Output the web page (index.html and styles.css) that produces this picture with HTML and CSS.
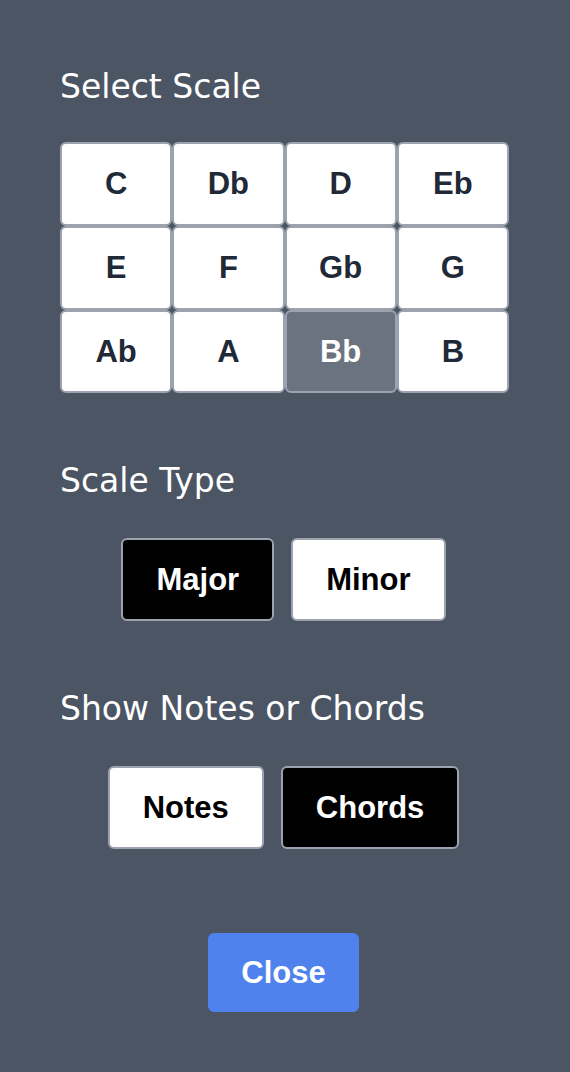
FILE: index.html
```html
<!DOCTYPE html>
<html>
<head>
<meta charset="utf-8">
<link rel="stylesheet" href="styles.css">
</head>
<body>
<div class="panel">
  <h2 class="heading first">Select Scale</h2>
  <div class="keys">
    <button class="key">C</button>
    <button class="key">Db</button>
    <button class="key">D</button>
    <button class="key">Eb</button>
    <button class="key">E</button>
    <button class="key">F</button>
    <button class="key">Gb</button>
    <button class="key">G</button>
    <button class="key">Ab</button>
    <button class="key">A</button>
    <button class="key selected">Bb</button>
    <button class="key">B</button>
  </div>
  <h2 class="heading section">Scale Type</h2>
  <div class="choices">
    <button class="choice active">Major</button>
    <button class="choice">Minor</button>
  </div>
  <h2 class="heading section">Show Notes or Chords</h2>
  <div class="choices">
    <button class="choice">Notes</button>
    <button class="choice active">Chords</button>
  </div>
  <div class="footer">
    <button class="close">Close</button>
  </div>
</div>
</body>
</html>
```
FILE: styles.css
```css
html, body {
  margin: 0;
  padding: 0;
}
body {
  background: #4b5563;
  width: 570px;
  height: 1072px;
  overflow: hidden;
}
.panel {
  padding: 68px 61px 0 60px;
  display: flex;
  flex-direction: column;
}
.heading {
  margin: 0;
  font-family: "DejaVu Sans", sans-serif;
  font-weight: normal;
  font-size: 33px;
  line-height: 38px;
  color: #ffffff;
}
.heading.section {
  margin-top: 69px;
}
.keys {
  margin-top: 36px;
  display: grid;
  grid-template-columns: repeat(4, 1fr);
  grid-template-rows: 84px 84px 83px;
  gap: 0;
}
.key, .choice, .close {
  font-family: "Liberation Sans", Arial, sans-serif;
  font-weight: bold;
  font-size: 31px;
  cursor: pointer;
}
.key {
  background: #ffffff;
  color: #1f2937;
  border: 2px solid #9ca3af;
  border-radius: 6px;
  padding: 0;
}
.key.selected {
  background: #6b7280;
  color: #ffffff;
}
.choices {
  margin-top: 38px;
  display: flex;
  justify-content: center;
  gap: 17px;
  padding-right: 2px;
}
.choice {
  height: 83px;
  padding: 0 33px;
  background: #ffffff;
  color: #000000;
  border: 2px solid #9ca3af;
  border-radius: 6px;
}
.choice.active {
  background: #000000;
  color: #ffffff;
}
.footer {
  margin-top: 84px;
  display: flex;
  justify-content: center;
  padding-right: 2px;
}
.close {
  height: 79px;
  padding: 0 33px;
  background: #4f82ec;
  color: #ffffff;
  border: none;
  border-radius: 6px;
}
```
